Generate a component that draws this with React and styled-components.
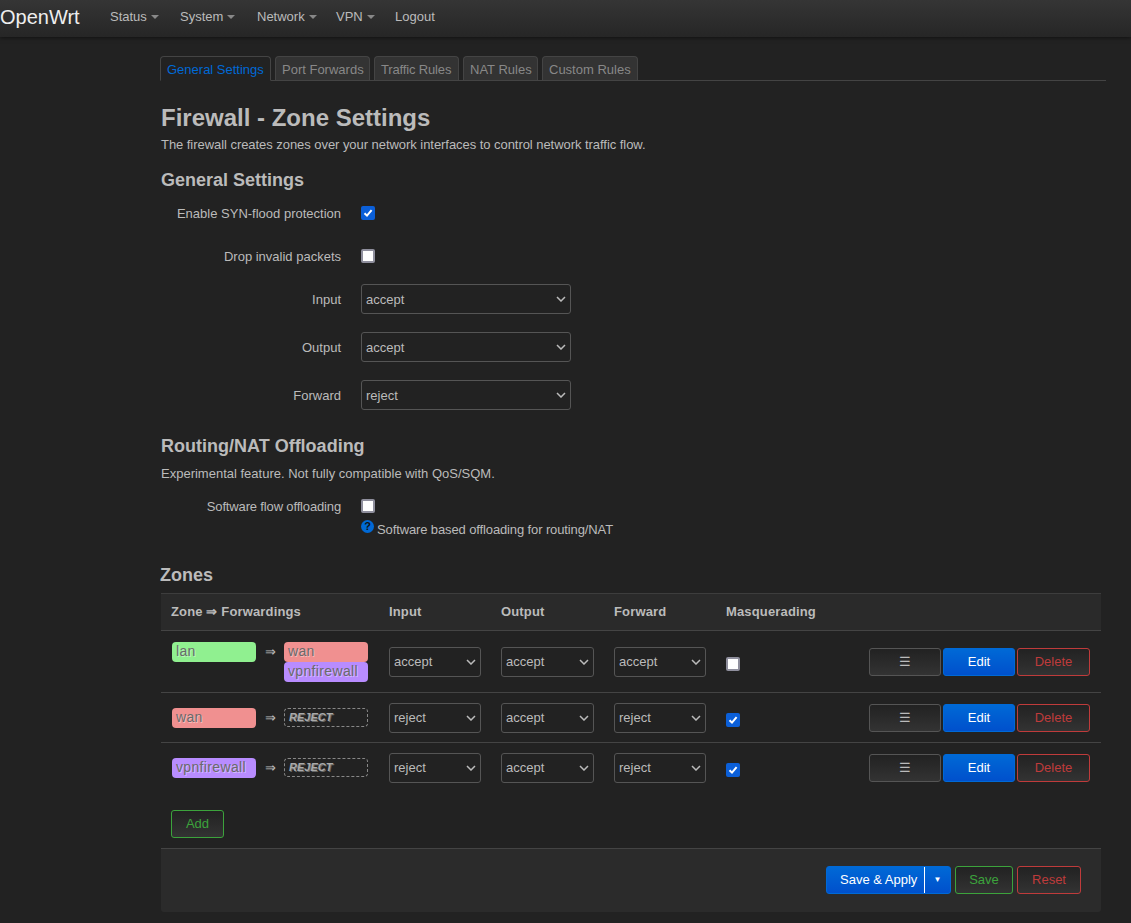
import React from 'react';
import styled, { createGlobalStyle } from 'styled-components';

const GlobalStyle = createGlobalStyle`
  html, body {
    margin: 0;
    padding: 0;
    background: #222;
    color: #bbb;
    font-family: "Liberation Sans", Arial, sans-serif;
    font-size: 13px;
    line-height: 18px;
  }
  * { box-sizing: border-box; }
`;

const Navbar = styled.nav`
  height: 37px;
  display: flex;
  align-items: center;
  background: linear-gradient(#353535, #262626);
  box-shadow: 0 1px 4px rgba(0, 0, 0, 0.5);
`;

const Brand = styled.a`
  font-size: 20px;
  color: #eee;
  width: 100px;
  position: relative;
  top: -2px;
`;

const NavItem = styled.a`
  display: flex;
  align-items: center;
  width: ${(p) => (p.$w ? `${p.$w}px` : 'auto')};
  padding: 0 0 0 10px;
  color: #bbb;
  position: relative;
  top: -2px;
`;

const Caret = styled.span`
  width: 0;
  height: 0;
  margin-left: 4px;
  margin-top: 1px;
  border-left: 4px solid transparent;
  border-right: 4px solid transparent;
  border-top: 4px solid #888;
`;

const Main = styled.main`
  width: 946px;
  margin-left: 160px;
  padding-top: 19px;
`;

const Tabs = styled.ul`
  display: flex;
  gap: 4px;
  list-style: none;
  margin: 0;
  padding: 0;
  height: 25px;
  border-bottom: 1px solid #444;
`;

const Tab = styled.li`
  width: ${(p) => p.$w}px;
  height: ${(p) => (p.$active ? 25 : 24)}px;
  padding: 4px 0 0 6px;
  white-space: nowrap;
  letter-spacing: ${(p) => p.$track || 0}px;
  border: 1px solid #444;
  border-bottom: ${(p) => (p.$active ? '1px solid #222' : 'none')};
  border-radius: 4px 4px 0 0;
  background: ${(p) => (p.$active ? '#222' : '#333')};
  color: ${(p) => (p.$active ? '#0069d6' : '#888')};
`;

const Content = styled.div`
  width: 941px;
  padding-left: 1px;
`;

const Title = styled.h2`
  margin: 22px 0 0;
  font-size: 24px;
  line-height: 30px;
  font-weight: bold;
  color: #bbb;
`;

const Description = styled.p`
  margin: ${(p) => p.$top}px 0 0;
  letter-spacing: ${(p) => p.$track || 0}px;
`;

const SectionTitle = styled.h3`
  margin: ${(p) => p.$top}px 0 0 ${(p) => p.$left || 0}px;
  font-size: 18px;
  line-height: 24px;
  font-weight: bold;
  color: #bbb;
`;

const FormRow = styled.div`
  display: flex;
  align-items: center;
  height: ${(p) => p.$h}px;
  margin-top: ${(p) => p.$top || 0}px;
`;

const Label = styled.label`
  width: 180px;
  padding-top: 1px;
  text-align: right;
  margin-right: 20px;
  letter-spacing: ${(p) => p.$track || 0}px;
`;

const SelectWrap = styled.span`
  position: relative;
  display: block;
  width: ${(p) => p.$w}px;
  height: 30px;
`;

const NativeSelect = styled.select`
  appearance: none;
  display: block;
  width: 100%;
  height: 100%;
  padding: 0 0 0 4px;
  font: 13px "Liberation Sans", Arial, sans-serif;
  color: #bbb;
  background: #222;
  border: 1px solid #555;
  border-radius: 3px;
`;

const Chevron = styled.svg`
  position: absolute;
  right: 5px;
  top: 12px;
  pointer-events: none;
`;

const Box = styled.span`
  display: inline-flex;
  align-items: center;
  justify-content: center;
  width: 14px;
  height: 14px;
  border-radius: 2px;
  background: ${(p) => (p.$checked ? '#0b5fd8' : '#fff')};
  border: ${(p) => (p.$checked ? 'none' : '2px solid #8f8f9d')};
`;

const Checkbox = ({ checked }) => (
  <Box $checked={checked}>
    {checked && (
      <svg width="10" height="10" viewBox="0 0 10 10">
        <path d="M1.5 5.2 L4 7.6 L8.6 2.2" fill="none" stroke="#fff" strokeWidth="2" />
      </svg>
    )}
  </Box>
);

const Hint = styled.div`
  display: flex;
  align-items: flex-start;
  margin: -2px 0 0 200px;
  height: 20px;
  letter-spacing: -0.12px;
`;

const HintIcon = styled.span`
  width: 13px;
  height: 13px;
  margin-right: 3px;
  border-radius: 50%;
  background: #0069d6;
  color: #111;
  font-size: 11px;
  font-weight: bold;
  line-height: 13px;
  text-align: center;
  letter-spacing: 0;
`;

const HintText = styled.span`
  margin-top: 1px;
`;

const ZoneTable = styled.table`
  width: 940px;
  margin-top: 6px;
  border-collapse: collapse;
  table-layout: fixed;
`;

const HeadCell = styled.th`
  height: 37px;
  padding: 0 10px;
  text-align: left;
  font-weight: bold;
  letter-spacing: 0.15px;
  color: #bbb;
  background: #2a2a2a;
  border-top: 1px solid #3d3d3d;
  border-bottom: 1px solid #444;
`;

const Row = styled.tr`
  height: ${(p) => p.$h}px;
  border-bottom: 1px solid ${(p) => (p.$last ? 'transparent' : '#444')};
`;

const Cell = styled.td`
  padding: 0 10px 0 ${(p) => p.$left || 10}px;
  vertical-align: middle;
`;

const ActionCell = styled.td`
  padding: 0 11px 0 0;
  vertical-align: middle;
`;

const ZoneFlow = styled.div`
  display: flex;
  align-items: flex-start;
`;

const Badge = styled.span`
  display: block;
  width: 84px;
  height: 20px;
  padding: 0 4px;
  font-size: 14px;
  letter-spacing: 0.35px;
  line-height: 18px;
  border-radius: 4px;
  color: #6a6a6a;
  text-shadow: 1px 1px 0 rgba(255, 255, 255, 0.4);
  background: ${(p) => p.$color};
  white-space: nowrap;
`;

const Reject = styled.span`
  display: block;
  width: 84px;
  height: 19px;
  padding: 0 4px;
  line-height: 17px;
  border: 1px dashed #888;
  border-radius: 4px;
  font-size: 11px;
  font-weight: bold;
  font-style: italic;
  color: #aaa;
  text-shadow: 1px 1px 0 #666;
`;

const Arrow = styled.span`
  width: 28px;
  text-align: center;
  line-height: 19px;
  color: #bbb;
`;

const Stack = styled.div`
  display: flex;
  flex-direction: column;
`;

const MasqWrap = styled.div`
  display: flex;
  padding-top: 4px;
`;

const Actions = styled.div`
  display: flex;
  justify-content: flex-end;
  gap: 2px;
  padding-top: 1px;
`;

const tones = {
  neutral: { border: '#555', color: '#bbb' },
  positive: { border: '#3ca33c', color: '#3ca33c' },
  negative: { border: '#bf3b3b', color: '#bf3b3b' },
};

const Button = styled.button`
  width: ${(p) => p.$w}px;
  height: 28px;
  padding: 0 0 2px;
  font: 13px "Liberation Sans", Arial, sans-serif;
  border-radius: 3px;
  border: 1px solid ${(p) => (p.$primary ? '#0069d6' : tones[p.$tone || 'neutral'].border)};
  color: ${(p) => (p.$primary ? '#fff' : tones[p.$tone || 'neutral'].color)};
  background: ${(p) => (p.$primary
    ? 'linear-gradient(#0069d6, #0050cc)'
    : 'linear-gradient(#222, #333)')};
`;

const AddWrap = styled.div`
  padding: 17px 0 10px 10px;
`;

const Footer = styled.div`
  height: 64px;
  display: flex;
  justify-content: flex-end;
  align-items: flex-start;
  gap: 4px;
  padding: 17px 20px 0 0;
  background: #2b2b2b;
  border-top: 1px solid #444;
  border-radius: 0 0 3px 3px;
`;

const SplitButton = styled.div`
  display: flex;
  width: 125px;
  height: 28px;
  border: 1px solid #0069d6;
  border-radius: 3px;
  background: linear-gradient(#0069d6, #0050cc);
  color: #fff;
`;

const SplitMain = styled.span`
  flex: 1;
  padding-left: 13px;
  line-height: 25px;
  border-right: 1px solid #fff;
`;

const SplitToggle = styled.span`
  width: 25px;
  text-align: center;
  font-size: 8px;
  line-height: 25px;
`;

const Menu = ({ w, children }) => (
  <NavItem $w={w}>
    {children}
    <Caret />
  </NavItem>
);

const zones = [
  {
    name: 'lan', color: '#90f090', h: 62, to: [['wan', '#f09090'], ['vpnfirewall', '#b88cff']],
    input: 'accept', output: 'accept', forward: 'accept', masq: false,
  },
  {
    name: 'wan', color: '#f09090', h: 50, input: 'reject', output: 'accept', forward: 'reject', masq: true,
  },
  {
    name: 'vpnfirewall', color: '#b88cff', h: 50, input: 'reject', output: 'accept', forward: 'reject', masq: true,
  },
];

const PolicySelect = ({ value, w }) => (
  <SelectWrap $w={w}>
    <NativeSelect defaultValue={value}>
      <option value="accept">accept</option>
      <option value="reject">reject</option>
      <option value="drop">drop</option>
    </NativeSelect>
    <Chevron width="10" height="6" viewBox="0 0 10 6">
      <path d="M1 1 L5 5 L9 1" fill="none" stroke="#bbb" strokeWidth="1.5" />
    </Chevron>
  </SelectWrap>
);

const App = () => (
  <>
    <GlobalStyle />
    <Navbar>
      <Brand>OpenWrt</Brand>
      <Menu w={70}>Status</Menu>
      <Menu w={77}>System</Menu>
      <Menu w={79}>Network</Menu>
      <Menu w={59}>VPN</Menu>
      <NavItem>Logout</NavItem>
    </Navbar>
    <Main>
      <Tabs>
        <Tab $w={111} $active>General Settings</Tab>
        <Tab $w={95}>Port Forwards</Tab>
        <Tab $w={85} $track={-0.15}>Traffic Rules</Tab>
        <Tab $w={75}>NAT Rules</Tab>
        <Tab $w={96}>Custom Rules</Tab>
      </Tabs>
      <Content>
        <Title>Firewall - Zone Settings</Title>
        <Description $top={3} $track={-0.05}>The firewall creates zones over your network interfaces to control network traffic flow.</Description>
        <SectionTitle $top={14}>General Settings</SectionTitle>
        <FormRow $h={38} $top={2}>
          <Label>Enable SYN-flood protection</Label>
          <Checkbox checked />
        </FormRow>
        <FormRow $h={38} $top={5}>
          <Label>Drop invalid packets</Label>
          <Checkbox />
        </FormRow>
        {[['Input', 'accept'], ['Output', 'accept'], ['Forward', 'reject']].map(([label, value]) => (
          <FormRow $h={48} key={label}>
            <Label>{label}</Label>
            <PolicySelect value={value} w={210} />
          </FormRow>
        ))}
        <SectionTitle $top={15}>Routing/NAT Offloading</SectionTitle>
        <Description $top={7}>Experimental feature. Not fully compatible with QoS/SQM.</Description>
        <FormRow $h={32} $top={7}>
          <Label $track={-0.15}>Software flow offloading</Label>
          <Checkbox />
        </FormRow>
        <Hint>
          <HintIcon>?</HintIcon>
          <HintText>Software based offloading for routing/NAT</HintText>
        </Hint>
        <SectionTitle $top={23} $left={-1}>Zones</SectionTitle>
        <ZoneTable>
          <colgroup>
            <col style={{ width: 218 }} />
            <col style={{ width: 112 }} />
            <col style={{ width: 113 }} />
            <col style={{ width: 112 }} />
            <col />
            <col style={{ width: 235 }} />
          </colgroup>
          <thead>
            <tr>
              <HeadCell>Zone ⇒ Forwardings</HeadCell>
              <HeadCell>Input</HeadCell>
              <HeadCell>Output</HeadCell>
              <HeadCell>Forward</HeadCell>
              <HeadCell>Masquerading</HeadCell>
              <HeadCell />
            </tr>
          </thead>
          <tbody>
            {zones.map((zone, i) => (
              <Row key={zone.name} $h={zone.h} $last={i === zones.length - 1}>
                <Cell $left={11}>
                  <ZoneFlow>
                    <Badge $color={zone.color}>{zone.name}</Badge>
                    <Arrow>⇒</Arrow>
                    {zone.to ? (
                      <Stack>
                        {zone.to.map(([name, color]) => (
                          <Badge key={name} $color={color}>{name}</Badge>
                        ))}
                      </Stack>
                    ) : (
                      <Reject>REJECT</Reject>
                    )}
                  </ZoneFlow>
                </Cell>
                <Cell><PolicySelect value={zone.input} w={92} /></Cell>
                <Cell><PolicySelect value={zone.output} w={93} /></Cell>
                <Cell><PolicySelect value={zone.forward} w={92} /></Cell>
                <Cell><MasqWrap><Checkbox checked={zone.masq} /></MasqWrap></Cell>
                <ActionCell>
                  <Actions>
                    <Button $w={72}>☰</Button>
                    <Button $w={72} $primary>Edit</Button>
                    <Button $w={73} $tone="negative">Delete</Button>
                  </Actions>
                </ActionCell>
              </Row>
            ))}
          </tbody>
        </ZoneTable>
        <AddWrap>
          <Button $w={53} $tone="positive">Add</Button>
        </AddWrap>
        <Footer>
          <SplitButton>
            <SplitMain>Save &amp; Apply</SplitMain>
            <SplitToggle>▼</SplitToggle>
          </SplitButton>
          <Button $w={58} $tone="positive">Save</Button>
          <Button $w={64} $tone="negative">Reset</Button>
        </Footer>
      </Content>
    </Main>
  </>
);

export default App;
